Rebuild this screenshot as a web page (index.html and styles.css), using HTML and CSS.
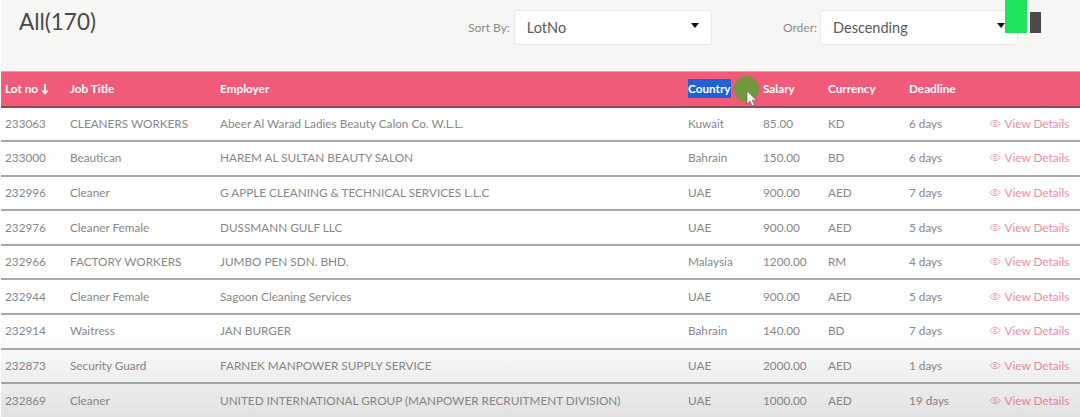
FILE: index.html
```html
<!DOCTYPE html>
<html lang="en">
<head>
<meta charset="utf-8">
<title>Jobs</title>
<link rel="stylesheet" href="styles.css">
</head>
<body>
<svg class="icon-defs" width="0" height="0" aria-hidden="true">
  <symbol id="eye" viewBox="0 0 14 10">
    <path d="M1 5C3 2.500 5 1.500 7 1.500s4 1 6 3.500c-2 2.500-4 3.500-6 3.500S3 7.500 1 5z" fill="none" stroke="currentColor" stroke-width="1"/>
    <circle cx="7" cy="5" r="1.600" fill="none" stroke="currentColor" stroke-width="1"/>
  </symbol>
</svg>
<div class="page">
  <header class="toolbar">
    <h1 class="title">All(170)</h1>
    <div class="filter filter-sort">
      <span class="filter-label">Sort By:</span>
      <div class="select select-sort"><span>LotNo</span><i class="caret"></i></div>
    </div>
    <div class="filter filter-order">
      <span class="filter-label">Order:</span>
      <div class="select select-order"><span>Descending</span><i class="caret"></i></div>
    </div>
  </header>
  <table class="jobs">
    <colgroup>
      <col class="c-lot"><col class="c-title"><col class="c-emp"><col class="c-country"><col class="c-salary"><col class="c-cur"><col class="c-dead"><col class="c-act">
    </colgroup>
    <thead>
      <tr>
        <th>Lot no <svg class="sort-arrow" viewBox="0 0 8 12" width="8" height="12"><path d="M4 1v9M1.500 7.500 4 10.500 6.500 7.500" fill="none" stroke="currentColor" stroke-width="1.800"/></svg></th>
        <th>Job Title</th>
        <th>Employer</th>
        <th><span class="selected">Country</span></th>
        <th>Salary</th>
        <th>Currency</th>
        <th>Deadline</th>
        <th></th>
      </tr>
    </thead>
    <tbody>
      <tr><td>233063</td><td>CLEANERS WORKERS</td><td>Abeer Al Warad Ladies Beauty Calon Co. W.L.L.</td><td>Kuwait</td><td>85.00</td><td>KD</td><td>6 days</td><td class="act"><svg class="eye"><use href="#eye"/></svg> View Details</td></tr>
      <tr><td>233000</td><td>Beautican</td><td>HAREM AL SULTAN BEAUTY SALON</td><td>Bahrain</td><td>150.00</td><td>BD</td><td>6 days</td><td class="act"><svg class="eye"><use href="#eye"/></svg> View Details</td></tr>
      <tr><td>232996</td><td>Cleaner</td><td>G APPLE CLEANING &amp; TECHNICAL SERVICES L.L.C</td><td>UAE</td><td>900.00</td><td>AED</td><td>7 days</td><td class="act"><svg class="eye"><use href="#eye"/></svg> View Details</td></tr>
      <tr><td>232976</td><td>Cleaner Female</td><td>DUSSMANN GULF LLC</td><td>UAE</td><td>900.00</td><td>AED</td><td>5 days</td><td class="act"><svg class="eye"><use href="#eye"/></svg> View Details</td></tr>
      <tr><td>232966</td><td>FACTORY WORKERS</td><td>JUMBO PEN SDN. BHD.</td><td>Malaysia</td><td>1200.00</td><td>RM</td><td>4 days</td><td class="act"><svg class="eye"><use href="#eye"/></svg> View Details</td></tr>
      <tr><td>232944</td><td>Cleaner Female</td><td>Sagoon Cleaning Services</td><td>UAE</td><td>900.00</td><td>AED</td><td>5 days</td><td class="act"><svg class="eye"><use href="#eye"/></svg> View Details</td></tr>
      <tr><td>232914</td><td>Waitress</td><td>JAN BURGER</td><td>Bahrain</td><td>140.00</td><td>BD</td><td>7 days</td><td class="act"><svg class="eye"><use href="#eye"/></svg> View Details</td></tr>
      <tr><td>232873</td><td>Security Guard</td><td>FARNEK MANPOWER SUPPLY SERVICE</td><td>UAE</td><td>2000.00</td><td>AED</td><td>1 days</td><td class="act"><svg class="eye"><use href="#eye"/></svg> View Details</td></tr>
      <tr><td>232869</td><td>Cleaner</td><td>UNITED INTERNATIONAL GROUP (MANPOWER RECRUITMENT DIVISION)</td><td>UAE</td><td>1000.00</td><td>AED</td><td>19 days</td><td class="act"><svg class="eye"><use href="#eye"/></svg> View Details</td></tr>
    </tbody>
  </table>
  <div class="bottom-shade"></div>
  <div class="mark-green"></div>
  <div class="mark-dark"></div>
  <div class="pointer-halo"></div>
  <svg class="pointer" viewBox="0 0 12 17" width="12" height="17"><path d="M1 1v13l3-3 2.200 5 2.200-1-2.200-4.800H10.500z" fill="#fff" stroke="#555" stroke-width=".6"/></svg>
</div>
</body>
</html>
```
FILE: styles.css
```css
* { box-sizing: border-box; }
html, body { margin: 0; height: 417px; overflow: hidden; }
body { font-family: "Lato", "Noto Sans", sans-serif; background: #f6f6f5; color: #777; }
.icon-defs { position: absolute; }
.page { position: relative; width: 1080px; height: 417px; overflow: hidden; border-left: 1px solid #fff; }

.toolbar { display: flex; align-items: flex-start; height: 71px; }
.title { margin: 7px 0 0 18px; width: 449px; font-size: 22.500px; line-height: 30px; font-weight: 400; color: #4a4a4a; }
.filter { display: flex; align-items: center; margin-top: 10px; }
.filter-label { font-size: 12px; color: #8c8c8c; margin-right: 4px; }
.filter-sort { width: 245px; }
.filter-order { padding-left: 70px; }
.filter-order .filter-label { margin-right: 3px; }
.select { display: flex; align-items: center; justify-content: space-between; height: 35px; background: #fff; border: 1px solid #e8e8e8; border-radius: 3px; font-size: 14.500px; color: #5a5a5a; padding: 0 12px 1px 12px; }
.select-sort { width: 198px; }
.select-order { width: 198px; }
.caret { width: 0; height: 0; border-left: 4.500px solid transparent; border-right: 4.500px solid transparent; border-top: 5px solid #111; margin-top: -3px; }

.jobs { width: 1079px; table-layout: fixed; border-collapse: collapse; font-size: 11.750px; }
.c-lot { width: 64px; } .c-title { width: 150px; } .c-emp { width: 468px; } .c-country { width: 75px; }
.c-salary { width: 65px; } .c-cur { width: 81px; } .c-dead { width: 80px; } .c-act { width: 96px; }
.jobs th { height: 35px; padding: 0 0 0 5px; background: #f25a79; color: #fff; font-weight: 700; text-align: left; border-top: 1px solid #e4a0ae; border-bottom: 2px solid #8e4a58; white-space: nowrap; }
.jobs td { height: 34.600px; padding: 0 0 1px 5px; background: #fff; color: #878787; white-space: nowrap; border-bottom: 2px solid #a9a9a9; }
.jobs th:first-child, .jobs td:first-child { padding-left: 4px; }
.jobs td.act { color: #f08ba2; padding-left: 5px; }
.sort-arrow { vertical-align: -2px; }
.selected { background: #1f62d8; padding: 2px 0; }
.eye { width: 12px; height: 9px; margin-right: 1px; }

.bottom-shade { position: absolute; left: 0; right: 0; top: 330px; bottom: 0; background: linear-gradient(rgba(120,120,120,0), rgba(120,120,120,.22)); pointer-events: none; }
.mark-green { position: absolute; left: 1004px; top: 0; width: 22px; height: 33px; background: #1ee35f; }
.mark-dark { position: absolute; left: 1029px; top: 12px; width: 11px; height: 21px; background: #4a4a48; }
.pointer-halo { position: absolute; left: 733px; top: 76px; width: 25px; height: 26px; border-radius: 50%; background: #72983c; }
.pointer { position: absolute; left: 745px; top: 90px; }
```
